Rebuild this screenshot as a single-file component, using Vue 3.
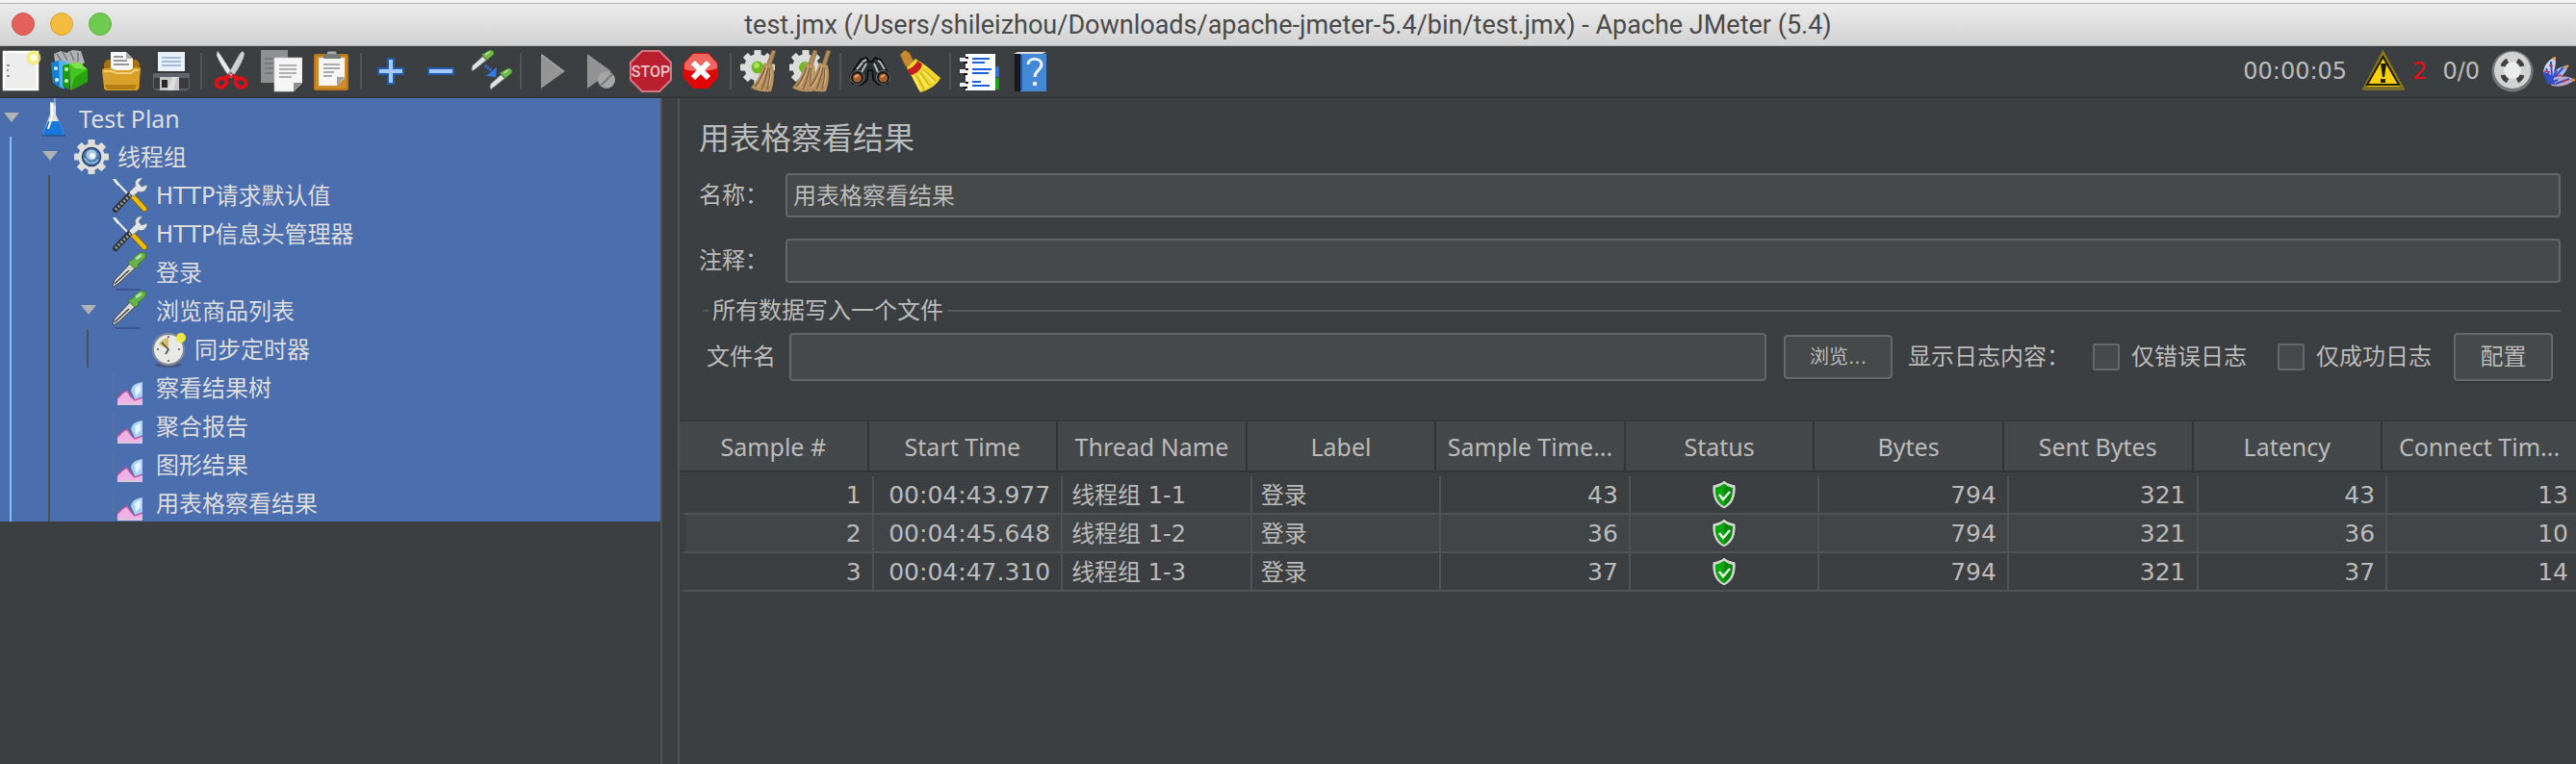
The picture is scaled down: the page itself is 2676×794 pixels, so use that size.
<script setup>
import { ref } from 'vue'

const gear = (cx, cy, r, fill) => {
  let teeth = ''
  for (let i = 0; i < 8; i++) {
    teeth += `<rect x="${cx - r * 0.2}" y="${cy - r}" width="${r * 0.4}" height="${r * 0.5}" rx="1" transform="rotate(${i * 45} ${cx} ${cy})"/>`
  }
  return `<g fill="${fill}">${teeth}<circle cx="${cx}" cy="${cy}" r="${r * 0.76}"/></g>`
}

const besom = (dx) =>
  `<g transform="translate(${dx} 0)"><path d="M34 0l4 1-5 15-4-2z" fill="#b08d5e" stroke="#7a5d38" stroke-width=".8"/><path d="M26 13l9 3c2 9 1 19-2 27-8 1-15 0-21-4 7-7 11-16 14-26z" fill="#b8925f"/><path d="M27 18c-3 9-6 15-11 20M30 18c-2 10-4 17-7 23M32 19c0 9-1 15-3 22" fill="none" stroke="#7d6040" stroke-width="1.3"/><path d="M29 17c-3 9-6 16-10 22M33 20c0 8-1 13-2 17" fill="none" stroke="#dcbd8f" stroke-width="1"/></g>`

const pipette = (x, y, s) =>
  `<g transform="translate(${x} ${y}) scale(${s})"><path d="M1 21l1-4L13 7l4 4L6 20l-4 3z" fill="#dfe2de" stroke="#7d7f7b" stroke-width=".7"/><path d="M12 5l6 6 2-2 5-4c1-3-1-5-4-5l-5 3z" fill="#70b94e" stroke="#417d2b" stroke-width=".7"/><path d="M16 5l5-3" stroke="#b9e69c" stroke-width="1.6"/></g>`

const groups = [
  [
    { label: 'New', art: '<rect x="2" y="2" width="35" height="39" fill="#ededed" stroke="#fff" stroke-width="2.5"/><path d="M5 16h3M5 21h2M5 27h3" stroke="#777" stroke-width="1.3"/><circle cx="33" cy="8" r="7.5" fill="#f4e95e" opacity=".75"/><circle cx="33" cy="8" r="3.8" fill="#fffde0"/>' },
    { label: 'Templates', art: '<path d="M4 4l7-3 6 2 6-3 9 1 4 12-8 6H6z" fill="#aeb2b4"/><path d="M7 4l5 8M13 2l5 9M21 2l4 9M29 3v9" stroke="#74787a" stroke-width="1.5"/><path d="M1 13l8-2 6 4v26l-5-2-7-5z" fill="#1481cd"/><path d="M9 11l8 1v5l-3 23-4-2z" fill="#51b6ef"/><circle cx="6" cy="19" r="2" fill="#d5f0ff"/><circle cx="7" cy="31" r="2" fill="#d5f0ff"/><path d="M13 16l7-2v27l-7-3z" fill="#1c9c12"/><path d="M20 14l11-1 8 7v13L21 42z" fill="#43c51f"/><path d="M20 14l11-1 7 7-12-1z" fill="#7de34b"/><path d="M39 20v13L21 42l5-14z" fill="#28a30f"/><circle cx="17" cy="20" r="2" fill="#c9ffb7"/><circle cx="17" cy="32" r="2" fill="#c9ffb7"/>' },
    { label: 'Open', art: '<path d="M4 14l3-4h31l3 4v26H4z" fill="#a76f12"/><path d="M11 2h16l7 7v13H11z" fill="#f7f7f7"/><path d="M27 2l7 7h-7z" fill="#aaa"/><path d="M14 7h10M14 11h14M14 15h16" stroke="#777" stroke-width="1.6"/><path d="M2 22c0-2 1-3 3-3h7l4 2h15l4-3h5c2 0 3 1 2 3l-2 18c0 2-1 3-3 3H8c-3 0-4-1-4-4z" fill="#d9a02a"/><path d="M4 22h8l5 2h15l4-3h4" fill="none" stroke="#f3cf72" stroke-width="2"/><path d="M5 36h33l-2 5H7z" fill="#b77c13"/>' },
    { label: 'Save', art: '<path d="M4 5h36l1 35-3 2H6l-3-2z" fill="#37393c"/><path d="M3 24h38v16l-3 2H6l-3-2z" fill="#606369"/><path d="M4 29h36v11H4z" fill="#393b40"/><rect x="8" y="2" width="28" height="20" fill="#e8f0fa"/><path d="M12 8h20M12 12h20M12 16h20" stroke="#8da9cf" stroke-width="1.5"/><rect x="10" y="28" width="20" height="14" fill="#c6c6c6"/><rect x="12" y="31" width="6" height="8" fill="#292929"/><path d="M23 28h5l-4 14h-6z" fill="#eee" opacity=".6"/>' }
  ],
  [
    { label: 'Cut', art: '<path d="M8 1l3 4 13 20-3 4C14 19 9 11 7 5z" fill="#e9eaea" stroke="#888" stroke-width=".7"/><path d="M34 1l-3 3-12 21 4 4c7-10 11-17 13-25z" fill="#cfd1d1" stroke="#888" stroke-width=".7"/><circle cx="22" cy="24" r="1.5" fill="#777"/><g fill="none" stroke="#df1018" stroke-width="4"><ellipse cx="12" cy="34" rx="5.5" ry="4.5" transform="rotate(-25 12 34)"/><ellipse cx="32" cy="34" rx="5.5" ry="4.5" transform="rotate(25 32 34)"/><path d="M15 30l6-4M29 30l-6-4"/></g>' },
    { label: 'Copy', art: '<rect x="1" y="0" width="28" height="34" fill="#8e9091"/><path d="M5 9h9M5 14h9M5 19h9M5 24h8" stroke="#707374" stroke-width="1.5"/><path d="M15 8h29v26l-9 9H15z" fill="#f5f5f5" stroke="#ccc" stroke-width=".7"/><path d="M44 34l-9 9v-9z" fill="#8c8f90"/><path d="M20 16h18M20 20h18M20 24h18M20 28h13" stroke="#999" stroke-width="1.5"/>' },
    { label: 'Paste', art: '<rect x="4" y="4" width="36" height="38" rx="2" fill="#ba761b"/><rect x="6" y="6" width="32" height="34" fill="#ce8b29"/><path d="M9 8h27v21l-8 8H9z" fill="#f6f6f6"/><path d="M36 28l-8 9v-9z" fill="#a1a1a1"/><path d="M14 15h17M14 19h17M14 23h11M14 27h9" stroke="#909090" stroke-width="1.7"/><path d="M14 9V5l4-1 1-3h8l1 3 4 1v4z" fill="#777c77"/><path d="M18 3h9" stroke="#aaa" stroke-width="2"/>' }
  ],
  [
    { label: 'Expand All', art: '<path d="M19 9h6v10h10v6H25v10h-6V25H9v-6h10z" fill="#a5cbfa" stroke="#235baf" stroke-width="2"/>' },
    { label: 'Collapse All', art: '<path d="M9 19h26v6H9z" fill="#a5cbfa" stroke="#235baf" stroke-width="2"/>' },
    { label: 'Toggle', art: pipette(1, 0, 0.95) + pipette(20, 19, 0.95) + '<path d="M16 16l7 6" stroke="#2c75dc" stroke-width="3" stroke-dasharray="2 1"/><path d="M28 18l-1 10-10-1z" fill="#2f7bea"/>' }
  ],
  [
    { label: 'Start', art: '<path d="M12 4l25 18-25 18z" fill="#949494"/><path d="M13 5l22 17" stroke="#a5a5a5" stroke-width="1.5"/>' },
    { label: 'Start no pauses', art: '<path d="M8 4l25 18L8 40z" fill="#929292"/><circle cx="28" cy="31" r="9" fill="#a4a6a7"/><path d="M22 37l12-12" stroke="#787b7c" stroke-width="2"/>' },
    { label: 'Stop', art: '<path d="M13 1h18l12 12v18L31 43H13L1 31V13z" fill="#b91f2e" stroke="#d47780" stroke-width="2"/><text x="22" y="28" text-anchor="middle" font-family="Liberation Sans Narrow, Roboto, sans-serif" font-weight="500" font-size="16" fill="#f0c4c8">STOP</text>' },
    { label: 'Shutdown', art: '<path d="M14 3h16l10 11v14L30 40H14L4 29V14z" fill="#df0707"/><path d="M14 4h16l9 10v5c-10 4-23 4-34 1v-6z" fill="#f17770" opacity=".85"/><path d="M14 13l16 16M30 13L14 29" stroke="#fff" stroke-width="6"/>' }
  ],
  [
    { label: 'Clear', art: gear(19, 18, 18, '#dbdddd') + '<circle cx="19" cy="18" r="6.500" fill="#70b922"/><circle cx="18" cy="16" r="3" fill="#a9e25d"/>' + besom(0) },
    { label: 'Clear All', art: gear(17, 18, 18, '#dbdddd') + '<circle cx="16" cy="18" r="6" fill="#70b922"/>' + besom(-9) + besom(5) }
  ],
  [
    { label: 'Search', art: '<g stroke="#090909" stroke-width="1.5"><path d="M12 10l6-2 3 4h3l3-4 6 2 9 17-2 8-9 1-6-5-1-10h-4l-1 10-6 5-9-1-3-8z" fill="#2d3033"/></g><path d="M14 12l4-2M30 11l3 2M8 20l6-7M37 20l-5-8M13 23l5-9M30 23l-4-9" stroke="#b7bdc1" stroke-width="2"/><circle cx="8.500" cy="28.500" r="7" fill="#17181a" stroke="#777" stroke-width="1"/><circle cx="35.500" cy="28.500" r="7" fill="#17181a" stroke="#777" stroke-width="1"/><circle cx="8.500" cy="29" r="4.500" fill="#a7602c"/><circle cx="35.500" cy="29" r="4.500" fill="#a7602c"/><path d="M6 28l4-2M33 28l4-2" stroke="#e7a269" stroke-width="2"/>' },
    { label: 'Reset Search', art: '<path d="M1 5l5-5 5 3 5 11-7 5c-4-3-5-8-8-14z" fill="#c78a32" stroke="#87561a" stroke-width="1"/><path d="M8 19l9-10 9 6c6 4 12 10 17 14-3 6-10 12-21 15C18 38 14 28 8 19z" fill="#f0d62d"/><path d="M8 20c4 0 10-5 11-9l5 4c-1 5-6 10-12 11z" fill="#c71b20"/><path d="M18 26l8 15M22 23l10 14M25 20l13 12" stroke="#c9b01c" stroke-width="1.2"/><path d="M15 27l7 14M20 25l9 14M25 22l11 12" stroke="#fff37c" stroke-width="1.4"/>' }
  ],
  [
    { label: 'Function Helper', art: '<path d="M36 17h6v11h-6z" fill="#2d73de"/><path d="M36 29h6v12h-6z" fill="#18a315"/><rect x="7" y="4" width="31" height="38" fill="#fff"/><g stroke="#1b62da" stroke-width="2"><path d="M14 9h18M14 13h13M14 20h20M14 24h17M14 33h9M14 37h18"/></g><g stroke="#ececec" stroke-width="4"><path d="M1 10h8M1 22h8M1 36h8"/></g><g stroke="#111" stroke-width="2"><path d="M5 13h4M5 25h4M5 39h4M7 8h3M7 20h3M7 34h3"/></g>' },
    { label: 'Help', art: '<path d="M5 4l4-2h30l-4 2z" fill="#ddd"/><path d="M6 4h8v39H6z" fill="#17191d"/><path d="M12 4h27v39H12z" fill="#4488d8"/><path d="M13 5v37" stroke="#255ba5" stroke-width="2"/><path d="M20 15c0-8 14-7 14 0 0 6-7 6-7 13" fill="none" stroke="#edf4ff" stroke-width="3"/><circle cx="27" cy="35" r="2.300" fill="#edf4ff"/>' }
  ]
]

const treeIcons = {
  flask: '<path d="M17 4l6 1v12l8 18-2 4H12l-2-4 7-18z" fill="#dce3e9"/><path d="M15 24h11l5 11-2 4H12l-2-4z" fill="#1778dc"/><path d="M19 6v14l-4 12" fill="none" stroke="#fff" stroke-width="2"/><path d="M22 0v8" stroke="#a6b2bf" stroke-width="1.500"/><path d="M8 39h25" stroke="#31538a" stroke-width="1.500"/>',
  gear: gear(20, 21, 18, '#dededb') + '<circle cx="20" cy="21" r="9.500" fill="#4f78ae" stroke="#253f72" stroke-width="1.500"/><circle cx="20" cy="19" r="5.500" fill="#a9c6e0"/><circle cx="21" cy="20" r="3" fill="#eef6fa"/><path d="M13 22a8 8 0 0014 2" fill="none" stroke="#92bce5" stroke-width="1.500"/>',
  tools: '<path d="M4 5l15 16" stroke="#e6e6e6" stroke-width="2.200"/><path d="M2 4l3 0 4 5-2 2z" fill="#eee"/><path d="M22 21l13 14" stroke="#80600b" stroke-width="6" stroke-linecap="round"/><path d="M22 21l13 14" stroke="#efba05" stroke-width="4.500" stroke-linecap="round"/><path d="M5 36l15-16" stroke="#303437" stroke-width="6" stroke-linecap="round"/><path d="M5 36l18-18" stroke="#9ca0a0" stroke-width="3" stroke-dasharray="2 2"/><path d="M19 18l7-7c-2-5 2-9 7-8l-4 5 3 4 6-2c0 6-5 9-9 7l-6 5z" fill="#e1e3e4" stroke="#697783" stroke-width=".7"/>',
  pipette: '<path d="M2 35l2-6L21 11l5 5L9 32l-6 4z" fill="#d5d8d4" stroke="#444" stroke-width="1"/><path d="M4 33l15-14" stroke="#444" stroke-width="1.500"/><path d="M20 9l4-2 5-6c4-2 9 0 7 5l-7 6-1 4-3 1-7-6z" fill="#67b149" stroke="#407b30" stroke-width="1"/><path d="M26 7l6-4" stroke="#aee497" stroke-width="3"/><path d="M5 39h26" stroke="#354f80" stroke-width="1.500"/>',
  timer: '<ellipse cx="20" cy="37" rx="14" ry="3" fill="#404866" opacity=".6"/><circle cx="20" cy="21" r="16" fill="#e8e8e6" stroke="#888b91" stroke-width="2"/><path d="M20 21V9a13 13 0 00-10 7z" fill="#d3bb6e"/><path d="M13 14l7 7-3 5" fill="none" stroke="#444" stroke-width="1.500"/><path d="M20 7v2M20 32v2M8 21h2M30 21h2" stroke="#777" stroke-width="2"/><circle cx="33" cy="9" r="5" fill="#f2e83c"/><path d="M33 4v11M28 9h10" stroke="#eee64d" stroke-width="2"/>',
  chart: '<path d="M3 6v25" stroke="#66759a" stroke-width="1"/><path d="M21 24c1-5 4-8 12-9v18l-7 2z" fill="#a9d0f8"/><path d="M25 21l6-4v8l-5 5z" fill="#e4f3ff"/><path d="M7 32l6-6 4-2 4 6 4 4 8-3v8H7z" fill="#eeb3e4"/><path d="M7 32l6-6 4-2 4 6 4 4 8-3" fill="none" stroke="#b9589a" stroke-width="1.500"/><path d="M7 38h26" stroke="#ddc3dc" stroke-width="2"/>'
}

const nodes = [
  { text: 'Test Plan', depth: 0, icon: 'flask', open: true, latin: true },
  { text: '线程组', depth: 1, icon: 'gear', open: true },
  { text: 'HTTP请求默认值', depth: 2, icon: 'tools' },
  { text: 'HTTP信息头管理器', depth: 2, icon: 'tools' },
  { text: '登录', depth: 2, icon: 'pipette' },
  { text: '浏览商品列表', depth: 2, icon: 'pipette', open: true },
  { text: '同步定时器', depth: 3, icon: 'timer' },
  { text: '察看结果树', depth: 2, icon: 'chart' },
  { text: '聚合报告', depth: 2, icon: 'chart' },
  { text: '图形结果', depth: 2, icon: 'chart' },
  { text: '用表格察看结果', depth: 2, icon: 'chart' }
]

const columns = ['Sample #', 'Start Time', 'Thread Name', 'Label', 'Sample Time...', 'Status', 'Bytes', 'Sent Bytes', 'Latency', 'Connect Tim...']
const samples = [
  { id: 1, start: '00:04:43.977', thread: '线程组 1-1', label: '登录', time: 43, bytes: 794, sent: 321, latency: 43, connect: 13 },
  { id: 2, start: '00:04:45.648', thread: '线程组 1-2', label: '登录', time: 36, bytes: 794, sent: 321, latency: 36, connect: 10 },
  { id: 3, start: '00:04:47.310', thread: '线程组 1-3', label: '登录', time: 37, bytes: 794, sent: 321, latency: 37, connect: 14 }
]

const name = ref('用表格察看结果')
const comment = ref('')
const fileName = ref('')
const errorsOnly = ref(false)
const successOnly = ref(false)
</script>

<template>
  <div class="window">
    <header class="titlebar">
      <div class="lights">
        <button class="light red" aria-label="Close"></button>
        <button class="light yellow" aria-label="Minimize"></button>
        <button class="light green" aria-label="Zoom"></button>
      </div>
      <div class="title">test.jmx (/Users/shileizhou/Downloads/apache-jmeter-5.4/bin/test.jmx) - Apache JMeter (5.4)</div>
    </header>

    <div class="toolbar">
      <div v-for="(group, g) in groups" :key="g" class="group">
        <button v-for="tool in group" :key="tool.label" class="tool" :aria-label="tool.label">
          <svg viewBox="0 0 44 44" v-html="tool.art"></svg>
        </button>
      </div>
      <div class="status">
        <span class="elapsed">00:00:05</span>
        <button class="errors" aria-label="Log errors">
          <svg viewBox="0 0 44 44">
            <path d="M21.500 3L42 40H2z" fill="#ffd000" stroke="#8c7a12" stroke-width="3" />
            <path d="M21.500 7L38 36H5z" fill="#fbd104" stroke="#201c06" stroke-width="2" />
            <path d="M2 38h40v4H2z" fill="#776b2d" />
            <path d="M19 14h6l-2 14h-2z" fill="#1d1a08" />
            <rect x="19" y="30" width="5" height="4" fill="#1d1a08" />
          </svg>
          <span>2</span>
        </button>
        <span>0/0</span>
        <svg class="wheel" viewBox="0 0 44 44">
          <circle cx="22" cy="22" r="21.500" fill="#75787a" />
          <circle cx="22" cy="21" r="19" fill="#d2d2d2" />
          <circle cx="22" cy="21" r="9" fill="#ececec" />
          <g fill="none" stroke="#3e4142" stroke-width="5">
            <path d="M12 17q1-4 5-6M27 11q4 2 5 6M12 26q1 4 5 6M32 26q-1 4-5 6" />
          </g>
        </svg>
        <svg class="feather" viewBox="0 0 36 44">
          <path d="M2 23C3 15 7 11 14 7c2 6 0 14-3 21z" fill="#c8d6f4" />
          <path d="M8 31c3-9 10-14 20-15-3 9-9 15-18 18z" fill="#a8bdec" />
          <path d="M9 34c8-7 16-9 26-3-8 6-16 8-24 6z" fill="#b8a8c4" />
          <path d="M1 22l5 13 9 1-5-10z" fill="#304dc0" />
          <path d="M5 19l5 13M10 12l1 17M16 21l-6 12M23 18l-9 10M17 31l-7 3M29 30l-14 5" stroke="#354fc2" stroke-width="2" />
          <path d="M3 22l6 1M8 16l4 1M16 27l5-1M22 33l5-2" stroke="#c23550" stroke-width="1.500" />
          <path d="M12 9l3-1M24 19l4-3M31 31l4 0" stroke="#df9548" stroke-width="2.500" />
        </svg>
      </div>
    </div>

    <div class="body">
      <nav class="sidebar">
        <ul class="tree">
          <li v-for="node in nodes" :key="node.text" class="node">
            <span v-for="level in node.depth" :key="level" class="guide" :class="{ root: level === 1 }"></span>
            <span class="twisty"><i v-if="node.open" class="arrow"></i></span>
            <svg class="node-icon" viewBox="0 0 40 40" v-html="treeIcons[node.icon]"></svg>
            <span class="node-text" :class="{ latin: node.latin }">{{ node.text }}</span>
          </li>
        </ul>
      </nav>
      <div class="splitter"></div>

      <main class="panel">
        <form class="form" @submit.prevent>
          <h1>用表格察看结果</h1>
          <div class="field">
            <label for="name">名称：</label>
            <input id="name" v-model="name" type="text" />
          </div>
          <div class="field">
            <label for="comment">注释：</label>
            <input id="comment" v-model="comment" type="text" />
          </div>
          <fieldset>
            <legend>所有数据写入一个文件</legend>
            <div class="file-row">
              <label for="file">文件名</label>
              <input id="file" v-model="fileName" class="file" type="text" />
              <button type="button" class="btn browse">浏览...</button>
              <span class="log-label">显示日志内容：</span>
              <label class="check"><input v-model="errorsOnly" type="checkbox" />仅错误日志</label>
              <label class="check"><input v-model="successOnly" type="checkbox" />仅成功日志</label>
              <button type="button" class="btn configure">配置</button>
            </div>
          </fieldset>
        </form>

        <table>
          <thead>
            <tr><th v-for="column in columns" :key="column" scope="col">{{ column }}</th></tr>
          </thead>
          <tbody>
            <tr v-for="s in samples" :key="s.id">
              <td class="num">{{ s.id }}</td>
              <td class="num">{{ s.start }}</td>
              <td>{{ s.thread }}</td>
              <td>{{ s.label }}</td>
              <td class="num">{{ s.time }}</td>
              <td class="state">
                <svg viewBox="0 0 28 32" role="img" aria-label="Success">
                  <path d="M14 1c3 3 7 4 12 5 1 12-2 20-12 25C4 26 1 18 2 6c5-1 9-2 12-5z" fill="#d0d5d0" stroke="#303133" stroke-width="1" />
                  <path d="M14 5c3 2 5 3 9 4 0 9-2 15-9 19C7 24 5 18 5 9c4-1 6-2 9-4z" fill="#08890c" />
                  <path d="M14 5c-3 2-5 3-9 4 0 9 2 15 9 19z" fill="#0aa50f" />
                  <path d="M9 16l4 5 7-8" fill="none" stroke="#eaffea" stroke-width="2.500" />
                </svg>
              </td>
              <td class="num">{{ s.bytes }}</td>
              <td class="num">{{ s.sent }}</td>
              <td class="num">{{ s.latency }}</td>
              <td class="num">{{ s.connect }}</td>
            </tr>
          </tbody>
        </table>
      </main>
    </div>
  </div>
</template>

<style>
body {
  background: #3c3f41;
}
</style>

<style scoped>
* {
  box-sizing: border-box;
}
.window {
  display: flex;
  flex-direction: column;
  min-height: 100vh;
  overflow: hidden;
  background: #3c3f41;
  color: #bbbbbb;
  font: 24px/32px "DejaVu Sans", "Noto Sans CJK SC", sans-serif;
}
button {
  padding: 0;
  border: 0;
  background: none;
  color: inherit;
  font: inherit;
}
svg {
  display: block;
  flex: none;
}

.titlebar {
  display: grid;
  grid-template-columns: 1fr auto 1fr;
  align-items: center;
  height: 48px;
  border-top: 3px solid #f3f3f3;
  border-bottom: 1px solid #b4b4b4;
  box-shadow: inset 0 1px #b2b2b2;
  background: linear-gradient(#ececec, #d2d2d2);
}
.lights {
  display: flex;
  gap: 16px;
  padding-left: 12px;
}
.light {
  width: 24px;
  height: 24px;
  border: 1px solid;
  border-radius: 50%;
}
.red {
  background: #e4605a;
  border-color: #c9524d;
}
.yellow {
  background: #f2bd3e;
  border-color: #d5a334;
}
.green {
  background: #6fca50;
  border-color: #5cb140;
}
.title {
  padding-top: 2px;
  color: #4a4a4a;
  font-family: Roboto, "Noto Sans", sans-serif;
  font-size: 27px;
}

.toolbar {
  display: flex;
  align-items: center;
  height: 54px;
  border-bottom: 2px solid #323537;
}
.group {
  display: flex;
}
.group + .group::before {
  content: "";
  width: 2px;
  height: 38px;
  margin: 7px 4px;
  background: #505456;
}
.tool {
  display: flex;
  align-items: center;
  justify-content: center;
  width: 52px;
  height: 52px;
}
.group:first-child .tool:first-child {
  width: 48px;
}
.tool svg,
.errors svg,
.wheel {
  width: 44px;
  height: 44px;
}
.status {
  display: flex;
  align-items: center;
  gap: 12px;
  margin-left: auto;
}
.elapsed {
  margin-right: 4px;
}
.errors {
  display: flex;
  align-items: center;
  gap: 8px;
  margin-right: 4px;
  color: #f00a14;
}
.wheel {
  margin-right: -4px;
}
.feather {
  width: 36px;
  height: 44px;
}

.body {
  display: flex;
  flex: 1;
}
.sidebar {
  flex: none;
  width: 688px;
  border-right: 2px solid #505355;
}
.tree {
  margin: 0;
  padding: 0;
  list-style: none;
  background: #4b6eaf;
  color: #dddddd;
}
.node {
  display: flex;
  align-items: center;
  height: 40px;
}
.guide {
  align-self: stretch;
  width: 40px;
  padding-left: 10px;
}
.guide::before {
  content: "";
  display: block;
  width: 2px;
  height: 100%;
  background: #4d5055;
}
.guide.root::before {
  background: #7dbcf7;
}
.twisty {
  width: 35px;
  padding-left: 4px;
}
.arrow {
  display: block;
  width: 0;
  border: 8px solid transparent;
  border-top: 10px solid #b0b1b2;
  border-bottom: 0;
}
.node-icon {
  width: 40px;
  height: 40px;
  margin-right: 7px;
}
.node-text {
  padding-top: 3px;
}
.node-text.latin {
  padding-top: 1px;
  font-family: "Noto Sans", sans-serif;
  font-size: 25px;
}
.splitter {
  flex: none;
  width: 18px;
  border-right: 2px solid #505355;
}

.panel {
  flex: 1;
  min-width: 0;
}
.form {
  padding: 22px 16px 0 20px;
}
h1 {
  margin: 0 0 16px;
  font-size: 32px;
  font-weight: 400;
  line-height: 40px;
}
.field {
  display: flex;
  align-items: center;
  margin-bottom: 22px;
}
.field label {
  width: 90px;
}
input[type="text"] {
  flex: 1;
  min-width: 0;
  height: 46px;
  padding: 0 6px 3px;
  border: 2px solid #646769;
  border-radius: 4px;
  background: #45494a;
  color: inherit;
  font: inherit;
}
.file-row input.file {
  height: 50px;
  margin: 0 18px 0 14px;
}
fieldset {
  min-width: 0;
  margin: -9px 0 0 4px;
  padding: 7px 8px 0 4px;
  border: 0 solid #54585a;
  border-top-width: 2px;
}
legend {
  margin-left: 2px;
  padding: 0 4px;
}
.file-row {
  display: flex;
  align-items: center;
}
.btn {
  border: 2px solid #65696a;
  border-radius: 4px;
  background: #45494a;
  box-shadow: 0 2px #35383a;
}
.browse {
  width: 113px;
  height: 46px;
  font-size: 20px;
}
.configure {
  width: 103px;
  height: 50px;
  margin-left: 23px;
}
.log-label {
  margin-left: 16px;
}
.check {
  display: flex;
  align-items: center;
  gap: 12px;
  margin-left: 24px;
}
.check + .check {
  margin-left: 32px;
}
input[type="checkbox"] {
  appearance: none;
  width: 28px;
  height: 28px;
  margin: 0;
  border: 2px solid #65696a;
  border-radius: 2px;
  background: #45494a;
}

table {
  width: 100%;
  margin-top: 41px;
  border-spacing: 0;
  table-layout: fixed;
}
th {
  height: 54px;
  padding: 1px 0 0;
  border: solid #323537;
  border-width: 1px 2px 2px 0;
  background: #45484a;
  font: 25px/32px "Noto Sans", sans-serif;
  white-space: nowrap;
}
th:last-child {
  width: 10.2%;
  border-right: 0;
}
tbody::before {
  content: "";
  display: block;
  height: 4px;
}
td {
  position: relative;
  height: 40px;
  padding: 1px 0 0 14px;
  border-bottom: 2px solid #505355;
  white-space: nowrap;
}
td:first-child {
  border-left: 6px solid transparent;
  background-clip: padding-box;
}
td + td::before {
  content: "";
  position: absolute;
  top: 0;
  bottom: 0;
  left: 3px;
  width: 2px;
  background: #505355;
}
tr:nth-child(even) td {
  background-color: #414547;
}
td.num {
  padding: 1px 8px 0 0;
  font-size: 25px;
  text-align: right;
}
td.state {
  padding: 0 0 0 8px;
}
.state svg {
  width: 28px;
  height: 32px;
  margin: 0 auto;
}
</style>
